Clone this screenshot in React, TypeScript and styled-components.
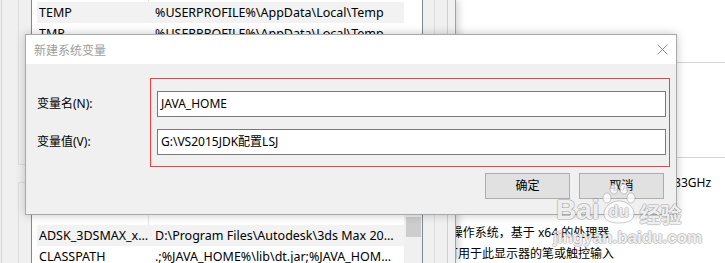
import styled, { createGlobalStyle } from 'styled-components'

const GlobalStyle = createGlobalStyle`
  html, body {
    margin: 0;
    padding: 0;
    background: #fff;
  }
  body {
    font-family: "Noto Sans", "Noto Sans CJK SC", sans-serif;
    color: #000;
  }
`

const Desktop = styled.div`
  position: relative;
  width: 725px;
  height: 263px;
  overflow: hidden;
  background: #fff;
`

/* system info window behind everything */
const SystemPanel = styled.div`
  position: absolute;
  left: 300px;
  top: 0;
  right: 0;
  bottom: 0;
  background: #fff;
  display: flex;
  flex-direction: column;
  font-size: 12px;
`

const PanelBlock = styled.div<{ $h: number }>`
  flex: none;
  height: ${p => p.$h}px;
  border-bottom: 1px solid #d4d4d4;
`

const InfoList = styled.div`
  display: flex;
  flex-direction: column;
  padding-top: 15px;
`

const InfoRow = styled.div<{ $gap?: number }>`
  display: grid;
  grid-template-columns: 122px 1fr;
  height: 20px;
  line-height: 20px;
  margin-top: ${p => p.$gap ?? 0}px;
  white-space: pre;
`

/* environment variables window */
const EnvWindow = styled.div`
  position: absolute;
  left: 0;
  top: 0;
  width: 456px;
  height: 263px;
  box-sizing: border-box;
  background: #f0f0f0;
  border-right: 1px solid #a3a3a3;
  box-shadow: 3px 0 7px rgba(0, 0, 0, 0.16);
  overflow: hidden;
  font-size: 12.5px;
`

const EnvInner = styled.div`
  margin-left: 1px;
  width: 447px;
  height: 100%;
  box-sizing: border-box;
  border-left: 1px solid #d6d6d6;
  border-right: 1px solid #cfcfcf;
  padding: 0 12px 0 16px;
  display: flex;
  flex-direction: column;
`

const GroupBox = styled.div<{ $top: number }>`
  flex: none;
  margin-top: ${p => p.$top}px;
  border: 1px solid #dcdcdc;
  padding: 17px 11px 8px 12px;
`

const ListView = styled.div<{ $h?: number }>`
  display: flex;
  height: ${p => (p.$h ? `${p.$h}px` : 'auto')};
  border: 1px solid #828790;
  background: #fff;
`

const ListContent = styled.div`
  flex: 1;
  min-width: 0;
  padding-left: 5px;
`

const ListHeader = styled.div`
  display: grid;
  grid-template-columns: 112px 1fr;
  height: 24px;
  box-sizing: border-box;
  padding-bottom: 6px;
  line-height: 18px;
  font-size: 12px;
`

const HeaderCell = styled.div<{ $first?: boolean }>`
  padding-left: ${p => (p.$first ? 3 : 6)}px;
  border-right: ${p => (p.$first ? '1px solid #e5e5e5' : 'none')};
  margin-bottom: -6px;
`

const ListRow = styled.div<{ $selected?: boolean }>`
  display: grid;
  grid-template-columns: 112px 1fr;
  height: 21px;
  line-height: 21px;
  background: ${p => (p.$selected ? '#f2f2f2' : 'transparent')};
`

const Cell = styled.div<{ $first?: boolean }>`
  padding-left: ${p => (p.$first ? 2 : 6)}px;
  padding-right: ${p => (p.$first ? 0 : 9)}px;
  white-space: nowrap;
  overflow: hidden;
  text-overflow: ellipsis;
`

const ScrollTrack = styled.div<{ $visible: boolean }>`
  flex: none;
  width: 18px;
  background: ${p => (p.$visible ? '#f0f0f0' : '#fff')};
  display: flex;
  flex-direction: column;
`

const ScrollThumb = styled.div`
  margin: 16px 1px 0 2px;
  height: 20px;
  background: #cdcdcd;
`

const GroupButtons = styled.div`
  display: flex;
  justify-content: flex-end;
  gap: 8px;
  margin-top: 9px;
`

const SmallButton = styled.div`
  width: 75px;
  height: 23px;
  box-sizing: border-box;
  border: 1px solid #adadad;
  background: #e1e1e1;
  font-size: 12px;
  line-height: 21px;
  text-align: center;
`

/* new variable dialog */
const Dialog = styled.div`
  position: absolute;
  left: 25px;
  top: 34px;
  width: 652px;
  height: 181px;
  box-sizing: border-box;
  border: 1px solid #a8a8a8;
  box-shadow: 0 0 9px rgba(0, 0, 0, 0.22);
  display: flex;
  flex-direction: column;
  font-size: 12px;
`

const TitleBar = styled.div`
  flex: none;
  height: 29px;
  background: #fff;
  display: flex;
  align-items: center;
  padding-left: 8px;
  color: #9d9d9d;
`

const Title = styled.span`
  flex: 1;
  padding-top: 1px;
`

const CloseButton = styled.div`
  width: 28px;
  height: 29px;
  display: flex;
  align-items: center;
  justify-content: center;
`

const DialogBody = styled.div`
  flex: 1;
  background: #f0f0f0;
  padding: 14px 0 0 11px;
  display: flex;
  flex-direction: column;
`

const FormArea = styled.div`
  display: flex;
`

const LabelColumn = styled.div`
  width: 113px;
  padding-top: 13px;
  display: flex;
  flex-direction: column;
  gap: 12px;
`

const Label = styled.div`
  height: 26px;
  line-height: 26px;
`

const Highlight = styled.div`
  width: 520px;
  box-sizing: border-box;
  border: 1px solid #ff3b3b;
  padding: 12px 3px 11px 6px;
  display: flex;
  flex-direction: column;
  gap: 12px;
`

const TextBox = styled.div`
  height: 26px;
  box-sizing: border-box;
  border: 1px solid #7a7a7a;
  background: #fff;
  padding-left: 3px;
  line-height: 24px;
  white-space: nowrap;
`

const ButtonRow = styled.div`
  display: flex;
  justify-content: flex-end;
  gap: 9px;
  margin-top: 6px;
  padding-right: 12px;
`

const DialogButton = styled.div`
  width: 85px;
  height: 26px;
  box-sizing: border-box;
  border: 1px solid #adadad;
  background: #e1e1e1;
  line-height: 24px;
  text-align: center;
`

/* baidu watermark over the shot */
const Watermark = styled.div`
  position: absolute;
  left: 553px;
  top: 183px;
  width: 140px;
  pointer-events: none;
  color: rgba(255, 255, 255, 0.85);
  text-shadow: 1px 0 rgba(130, 130, 130, 0.4), -1px 0 rgba(130, 130, 130, 0.4),
    0 1px rgba(130, 130, 130, 0.4), 0 -1px rgba(130, 130, 130, 0.4);
  font-family: "Liberation Sans", Arial, sans-serif;
`

const BrandLine = styled.div`
  display: flex;
  align-items: flex-end;
  height: 41px;
`

const BrandWord = styled.span`
  margin-left: 3px;
  font-size: 28px;
  font-weight: bold;
  line-height: 28px;
`

const Paw = styled.div`
  position: relative;
  width: 38px;
  height: 41px;
  flex: none;
`

const PawText = styled.span`
  position: absolute;
  left: 0;
  right: 0;
  top: 20px;
  text-align: center;
  font-size: 17px;
  font-weight: bold;
  line-height: 18px;
`

const BrandCn = styled.span`
  margin-left: 2px;
  font-family: "Noto Sans CJK SC", sans-serif;
  font-size: 21px;
  font-weight: bold;
  line-height: 22px;
`

const BrandUrl = styled.div`
  margin-top: 5px;
  font-size: 17px;
  font-weight: bold;
  line-height: 17px;
`

const userVars = [
  ['TEMP', '%USERPROFILE%\\AppData\\Local\\Temp'],
  ['TMP', '%USERPROFILE%\\AppData\\Local\\Temp'],
]

const systemVars = [
  ['ADSK_3DSMAX_x64_2018', 'D:\\Program Files\\Autodesk\\3ds Max 2018\\'],
  ['CLASSPATH', '.;%JAVA_HOME%\\lib\\dt.jar;%JAVA_HOME%\\lib\\tools.jar;'],
  ['ComSpec', '%SystemRoot%\\system32\\cmd.exe'],
]

const App = () => {
  return (
    <Desktop>
      <GlobalStyle />

      <SystemPanel>
        <PanelBlock $h={62} />
        <PanelBlock $h={94} />
        <InfoList>
          <InfoRow>
            <span>处理器:</span>
            <span>Intel(R) Core(TM)2 CPU T5600 @ 1.83GHz    1.83GHz</span>
          </InfoRow>
          <InfoRow $gap={4}>
            <span>已安装的内存(RAM):</span>
            <span>4.00 GB</span>
          </InfoRow>
          <InfoRow $gap={6}>
            <span>系统类型:</span>
            <span>64 位操作系统，基于 x64 的处理器</span>
          </InfoRow>
          <InfoRow $gap={1}>
            <span>笔和触控:</span>
            <span>没有可用于此显示器的笔或触控输入</span>
          </InfoRow>
        </InfoList>
      </SystemPanel>

      <EnvWindow>
        <EnvInner>
          <GroupBox $top={-41}>
            <ListView $h={145}>
              <ListContent>
                <ListHeader>
                  <HeaderCell $first>变量</HeaderCell>
                  <HeaderCell>值</HeaderCell>
                </ListHeader>
                {userVars.map(([name, value], i) => (
                  <ListRow key={name} $selected={i === 0}>
                    <Cell $first>{name}</Cell>
                    <Cell>{value}</Cell>
                  </ListRow>
                ))}
              </ListContent>
              <ScrollTrack $visible={false} />
            </ListView>
            <GroupButtons>
              <SmallButton>新建(N)...</SmallButton>
              <SmallButton>编辑(E)...</SmallButton>
              <SmallButton>删除(D)</SmallButton>
            </GroupButtons>
          </GroupBox>

          <GroupBox $top={17}>
            <ListView>
              <ListContent>
                <ListHeader>
                  <HeaderCell $first>变量</HeaderCell>
                  <HeaderCell>值</HeaderCell>
                </ListHeader>
                {systemVars.map(([name, value], i) => (
                  <ListRow key={name} $selected={i === 0}>
                    <Cell $first>{name}</Cell>
                    <Cell>{value}</Cell>
                  </ListRow>
                ))}
              </ListContent>
              <ScrollTrack $visible>
                <ScrollThumb />
              </ScrollTrack>
            </ListView>
          </GroupBox>
        </EnvInner>
      </EnvWindow>

      <Dialog>
        <TitleBar>
          <Title>新建系统变量</Title>
          <CloseButton>
            <svg width="11" height="11" viewBox="0 0 11 11">
              <path d="M0.5 0.5 L10.5 10.5 M10.5 0.5 L0.5 10.5" stroke="#8a8a8a" strokeWidth="1" fill="none" />
            </svg>
          </CloseButton>
        </TitleBar>
        <DialogBody>
          <FormArea>
            <LabelColumn>
              <Label>变量名(N):</Label>
              <Label>变量值(V):</Label>
            </LabelColumn>
            <Highlight>
              <TextBox>JAVA_HOME</TextBox>
              <TextBox>G:\VS2015JDK配置LSJ</TextBox>
            </Highlight>
          </FormArea>
          <ButtonRow>
            <DialogButton>确定</DialogButton>
            <DialogButton>取消</DialogButton>
          </ButtonRow>
        </DialogBody>
      </Dialog>

      <Watermark>
        <BrandLine>
          <BrandWord>Bai</BrandWord>
          <Paw>
            <svg width="38" height="41" viewBox="0 0 38 41">
              <g fill="rgba(255,255,255,0.75)" stroke="rgba(130,130,130,0.4)" strokeWidth="1">
                <ellipse cx="7" cy="15" rx="4" ry="5" />
                <ellipse cx="14" cy="6" rx="4" ry="5" />
                <ellipse cx="24" cy="6" rx="4" ry="5" />
                <ellipse cx="31" cy="15" rx="4" ry="5" />
                <path d="M4 31 C4 23 12 18 19 18 C26 18 34 23 34 31 C34 37 28 40 19 40 C10 40 4 37 4 31 Z" />
              </g>
            </svg>
            <PawText>du</PawText>
          </Paw>
          <BrandCn>经验</BrandCn>
        </BrandLine>
        <BrandUrl>jingyan.baidu.com</BrandUrl>
      </Watermark>
    </Desktop>
  )
}

export default App
